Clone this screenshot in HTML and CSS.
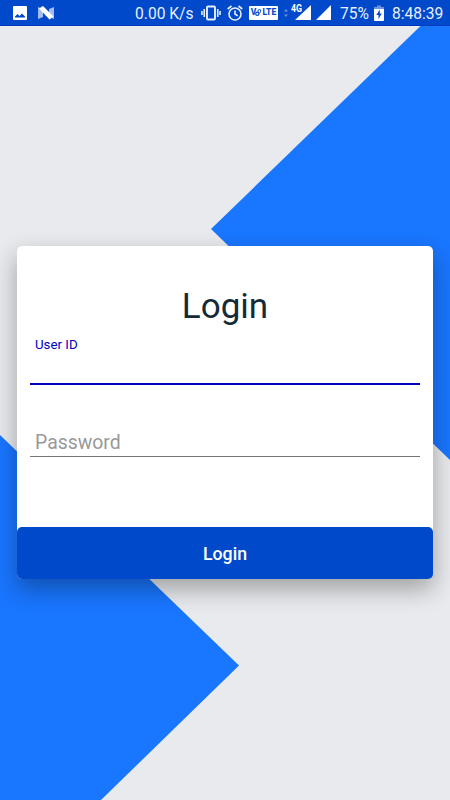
FILE: index.html
```html
<!DOCTYPE html>
<html lang="en">
<head>
  <meta charset="UTF-8">
  <meta name="viewport" content="width=device-width, initial-scale=1.0">
  <link rel="stylesheet" href="styles.css">
  <title>Login</title>
</head>
<body>
  <svg class="background" viewBox="0 0 450 800">
    <path d="M421 25.500 450 25.500V460L211 229z" />
    <path d="M0 435 239 665.500 101 800H0z" />
  </svg>

  <header class="statusBar">
    <svg class="imageIcon" width="14" height="14" viewBox="0 0 14 14">
      <rect width="14" height="14" rx="1" fill="#fff" />
      <path d="M2 11.500V10.500L4.500 8l2 2L9 7.500l3 3v1z" fill="#0049cb" />
    </svg>
    <svg class="nougatIcon" width="16" height="14" viewBox="0 0 16 14">
      <path d="M0 1 5 3v8l-5 2zM11 3l5-2v12l-5-2z" fill="#a5bdec" />
      <path d="M1 2.500 5 0 15.500 10.500 11.500 13.500z" fill="#fff" />
    </svg>
    <span class="speed">0.00 K/s</span>
    <svg class="vibrateIcon" width="20" height="16" viewBox="0 0 20 16" fill="none" stroke="#e8efff" stroke-width="1.900">
      <rect x="6" y="1.500" width="8" height="13" rx="1" />
      <path d="M3.250 4v8M.95 6v4M16.750 4v8M19.050 6v4" stroke-width="1.600" />
    </svg>
    <svg class="alarmIcon" width="16" height="16" viewBox="0 0 16 16" fill="none" stroke="#e8efff" stroke-width="1.600">
      <circle cx="8" cy="9" r="6" />
      <path d="M.7 4 4.500 1M15.300 4l-3.800-3M8 5.500V9l2.700 1.800" />
    </svg>
    <div class="volte">
      <span>V</span>
      <svg width="7" height="9" viewBox="0 0 7 9" fill="none" stroke="#0049cb">
        <circle cx="2.300" cy="5.700" r="1.600" stroke-width="1.200" />
        <path d="M3 3.800Q2.500 1.500 4.500 1.500T5.500 3.500 4.500 5.500" />
      </svg>
      <span>LTE</span>
    </div>
    <svg class="dataIcon" width="4" height="8" viewBox="0 0 4 8" fill="#6c94df">
      <path d="M2 0 4 2.500H0zM2 8 0 5.500h4z" />
    </svg>
    <div class="network">
      <svg width="16" height="15" viewBox="0 0 16 15">
        <path d="M16 0v15H0z" fill="#fff" />
      </svg>
      <span>4G</span>
    </div>
    <svg class="signalIcon" width="15" height="15" viewBox="0 0 15 15">
      <path d="M15 0v15H0z" fill="#fff" />
    </svg>
    <span class="percent">75%</span>
    <svg class="batteryIcon" width="10" height="16" viewBox="0 0 10 16">
      <path d="M0 4V2.500Q0 2 .5 2H3V.5h4V2h2.500q.5 0 .5.500V4z" fill="#6c94df" />
      <path d="M0 4h10v11q0 1-1 1H1q-1 0-1-1z" fill="#fff" />
      <path d="M5.800 4.500 2.300 10h2.200v4L7.800 8.500h-2z" fill="#0049cb" />
    </svg>
    <span class="time">8:48:39</span>
  </header>

  <form class="loginCard">
    <h1>Login</h1>
    <div class="field active">
      <label for="userId">User ID</label>
      <input type="text" id="userId">
    </div>
    <div class="field password">
      <input type="password" id="password" placeholder="Password">
    </div>
    <button type="button">Login</button>
  </form>
</body>
</html>
```
FILE: styles.css
```css
* {
  box-sizing: border-box;
}

body {
  margin: 0;
  height: 800px;
  overflow: hidden;
  background-color: #e8eaed;
  font-family: Roboto, sans-serif;
}

.background {
  position: absolute;
  top: 0;
  left: 0;
  z-index: -1;
  width: 450px;
  height: 800px;
  fill: #1976ff;
}

.statusBar {
  display: flex;
  align-items: center;
  height: 26px;
  padding-left: 13px;
  border-bottom: 1px solid #0038c2;
  background-color: #0049cb;
  color: #e8efff;
  font-size: 15.600px;
  line-height: 26px;
  white-space: nowrap;
}

.statusBar > * {
  flex-shrink: 0;
}

.statusBar > span {
  padding-top: 3px;
}

.nougatIcon {
  margin-left: 11px;
}

.speed {
  width: 59px;
  margin-left: 81px;
}

.vibrateIcon {
  margin-left: 7px;
}

.alarmIcon {
  margin-left: 6px;
}

.volte {
  display: flex;
  align-items: center;
  justify-content: center;
  width: 29px;
  height: 14px;
  margin-left: 6px;
  border-radius: 1px;
  background-color: #fff;
  color: #0049cb;
  font-size: 8.500px;
  font-weight: 800;
  line-height: 15px;
}

.volte svg {
  margin: -1px 0 0 -1px;
}

.dataIcon {
  margin-left: 6px;
}

.network {
  position: relative;
  width: 16px;
  height: 15px;
  margin-left: 7px;
}

.network svg {
  display: block;
}

.network span {
  position: absolute;
  top: -1px;
  left: -4px;
  color: #fff;
  font-size: 10px;
  font-weight: bold;
  line-height: 10px;
  text-shadow: 1px 0 #0049cb, 0 1px #0049cb;
  transform: scaleX(0.88);
  transform-origin: left;
}

.signalIcon {
  margin-left: 5px;
}

.percent {
  width: 29px;
  margin-left: 9px;
}

.batteryIcon {
  margin-left: 5px;
}

.time {
  margin-left: 8px;
}

.loginCard {
  display: flex;
  flex-direction: column;
  width: 416px;
  height: 333px;
  margin: 220px 0 0 17px;
  border-radius: 5px;
  background-color: #fff;
  box-shadow: 0 10px 24px rgba(0, 0, 0, 0.32);
}

h1 {
  margin: 40px 0 0;
  color: #142b37;
  font-size: 35px;
  font-weight: normal;
  line-height: 42px;
  text-align: center;
}

.field {
  display: flex;
  flex-direction: column;
  margin: 0 13px;
}

.active {
  height: 57px;
  padding-top: 9px;
  border-bottom: 2px solid #0000bd;
}

.field label {
  padding-left: 5px;
  color: #0000bd;
  font-size: 13.300px;
  line-height: 16px;
}

.field input {
  flex: 1;
  min-height: 0;
  padding: 0 5px;
  border: none;
  outline: none;
  background: none;
  font-family: inherit;
  font-size: 19.400px;
}

.field input::placeholder {
  color: #999;
  opacity: 1;
}

.password {
  height: 30px;
  margin-top: 42px;
  padding-top: 2px;
  border-bottom: 1px solid #757575;
}

button {
  height: 52px;
  margin-top: auto;
  padding: 1px 0 0;
  border: none;
  border-radius: 5px;
  background-color: #0049cb;
  color: #fff;
  font-family: inherit;
  font-size: 17.700px;
  font-weight: 500;
}
```
